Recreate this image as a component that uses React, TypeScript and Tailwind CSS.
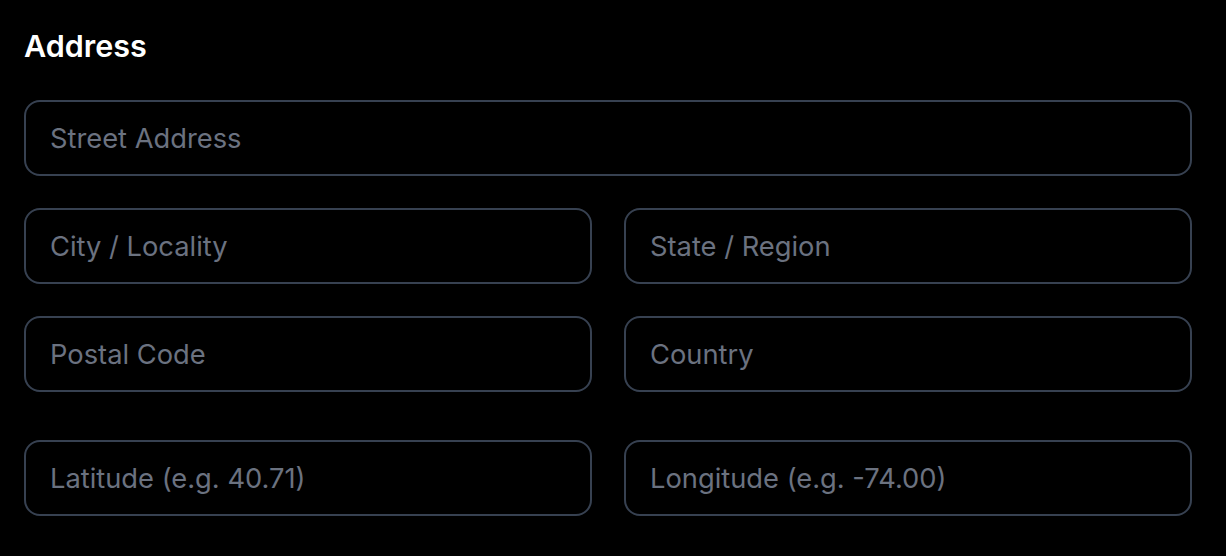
export default function App() {
  const field =
    'h-[76px] w-full rounded-[16px] border-2 border-[#374151] bg-black px-[24px] text-[27.3px] text-white outline-none placeholder:text-[#6b7280]';

  return (
    <div className="min-h-[556px] bg-black px-[24px] pt-[24px] font-['Inter',sans-serif]">
      <h2 className="mb-[32px] text-[30.5px] font-semibold leading-[44px] text-white">Address</h2>

      <div className="flex w-[1168px] flex-col gap-[32px]">
        <input className={field} placeholder="Street Address" />
        <div className="grid grid-cols-2 gap-[32px]">
          <input className={field} placeholder="City / Locality" />
          <input className={field} placeholder="State / Region" />
        </div>
        <div className="grid grid-cols-2 gap-[32px]">
          <input className={field} placeholder="Postal Code" />
          <input className={field} placeholder="Country" />
        </div>
        <div className="mt-[16px] grid grid-cols-2 gap-[32px]">
          <input className={field} placeholder="Latitude (e.g. 40.71)" />
          <input className={field} placeholder="Longitude (e.g. -74.00)" />
        </div>
      </div>
    </div>
  );
}
